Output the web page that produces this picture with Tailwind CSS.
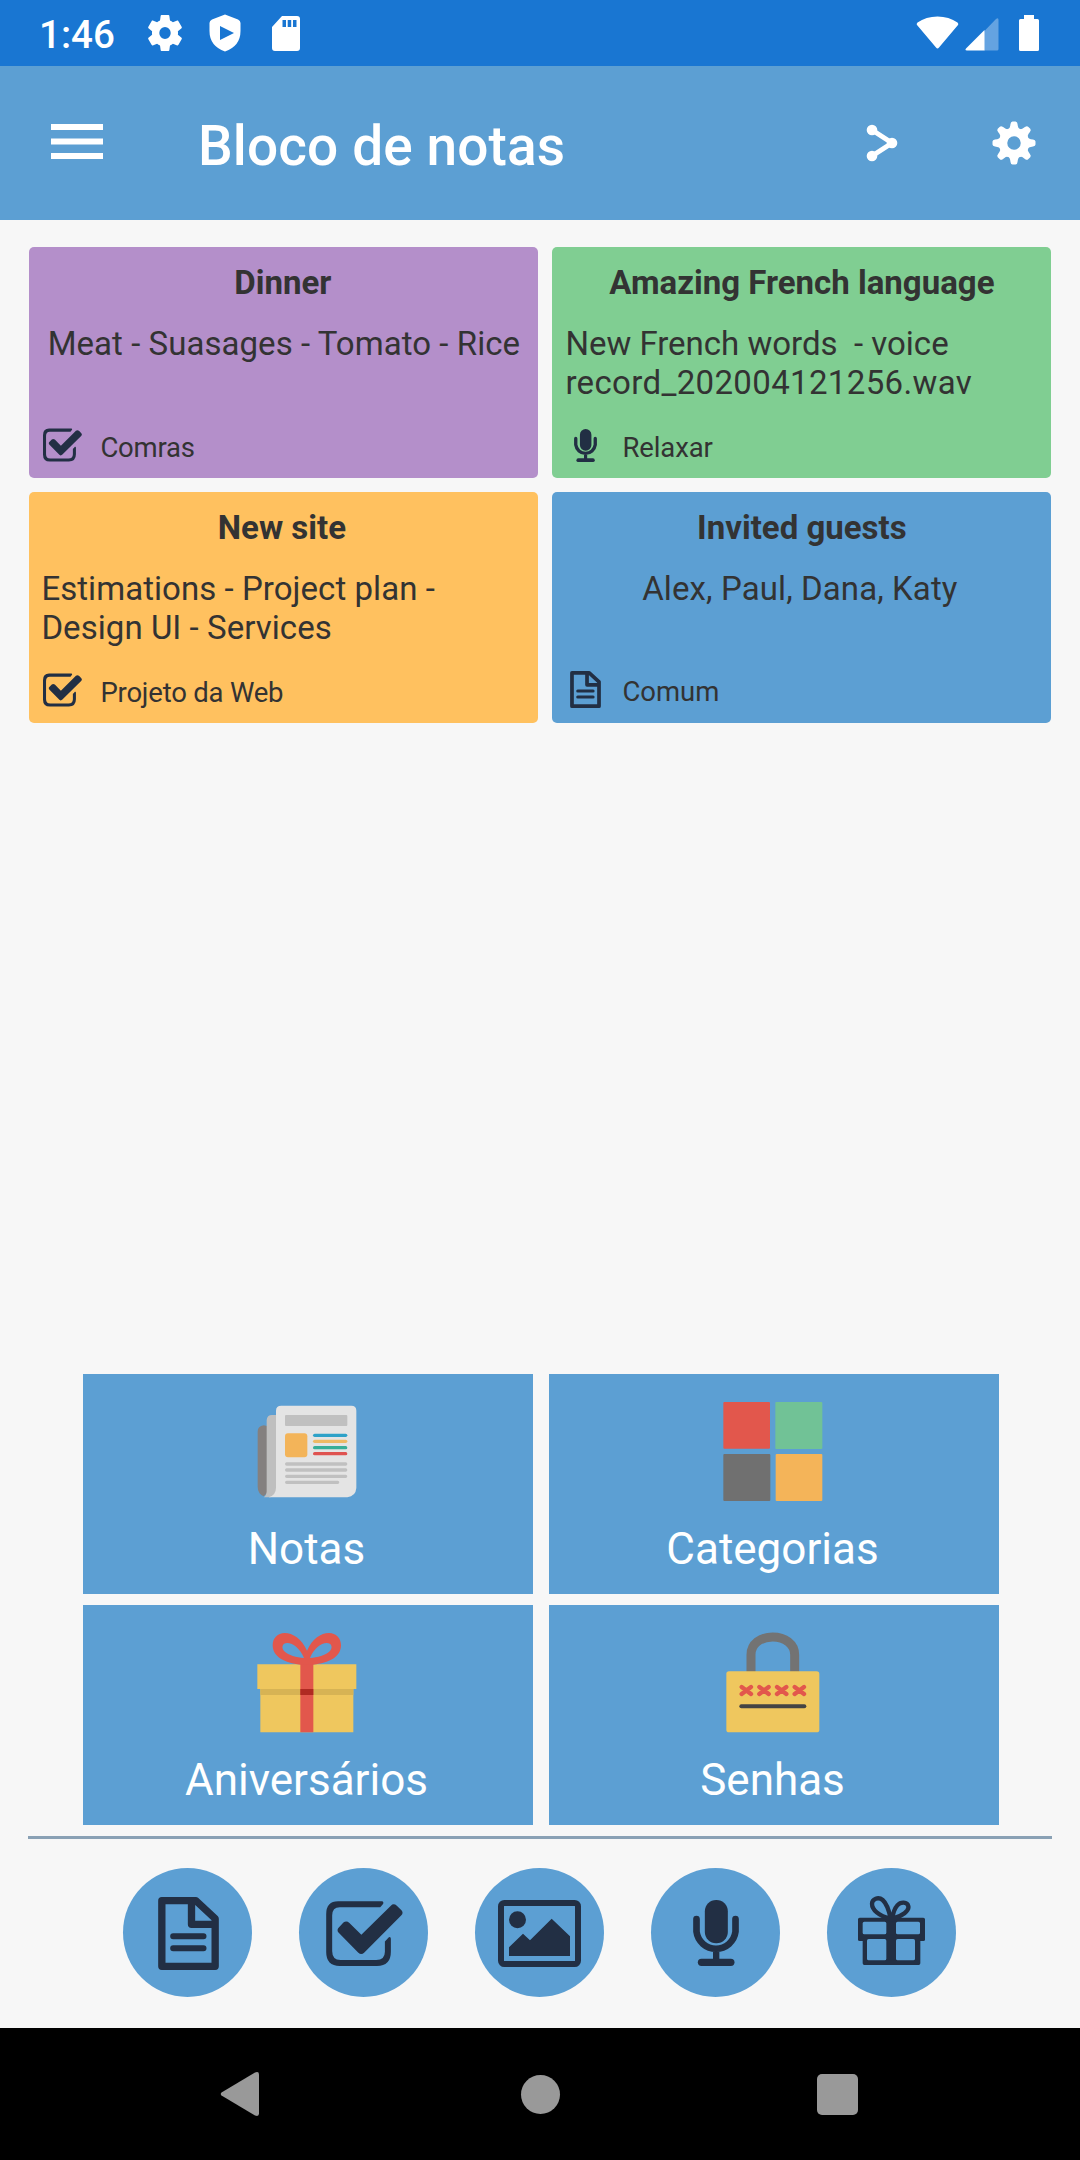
<!DOCTYPE html>
<html lang="pt">
<head>
    <meta charset="UTF-8">
    <meta name="viewport" content="width=device-width, initial-scale=1.0">
    <title>Bloco de notas</title>
    <script src="https://cdn.jsdelivr.net/npm/@tailwindcss/browser@4"></script>
</head>
<body class="bg-[#f7f7f7] font-['Roboto',sans-serif]">
    <!-- shared icons -->
    <svg class="hidden">
        <symbol id="icon-doc" viewBox="145 141 182 219">
            <path d="M156 152H258L316 206V349H156Z M245 152V223H316" fill="none" stroke="#222f44" stroke-width="22" stroke-linejoin="round"/>
            <path d="M190 259H281M190 295H281" stroke="#222f44" stroke-width="18" stroke-linecap="round"/>
        </symbol>
        <symbol id="icon-check" viewBox="649 152 231 196">
            <path d="M685 153H818Q823 154 821 160L812 171H690Q667 171 667 196V303Q667 330 692 330H800Q826 330 826 305V274L838 261Q844 259 844 266V305Q844 348 802 348H690Q649 348 649 306V192Q649 153 685 153Z" fill="#222f44"/>
            <path d="M685 234L701 217Q710 210 719 218L755 254L844 166Q852 158 862 166L876 180Q883 188 875 196L764 307Q755 316 746 308L686 247Q681 241 685 234Z" fill="#222f44"/>
        </symbol>
        <symbol id="icon-mic" viewBox="279 150 137 198">
            <rect x="314" y="150" width="69" height="130" rx="34" fill="#222f44"/>
            <path d="M289 207V245A59 59 0 0 0 406 245V207" fill="none" stroke="#222f44" stroke-width="20" stroke-linecap="round"/>
            <path d="M348 305V335" stroke="#222f44" stroke-width="19"/>
            <path d="M304 337H392" stroke="#222f44" stroke-width="22" stroke-linecap="round"/>
        </symbol>
    </svg>

    <div class="flex flex-col w-[1080px] h-[2160px] overflow-hidden">
        <!-- status bar -->
        <div class="flex justify-between h-[66px] bg-[#1976d2] text-white">
            <div class="flex items-center pl-[39px]">
                <span class="w-[109px] text-[38.5px] leading-none font-medium pt-[4px]">1:46</span>
                <svg class="w-[34px] h-[36px]" viewBox="2.2 2 19.6 20" preserveAspectRatio="none" fill="currentColor"><path d="M19.43 12.98c.04-.32.07-.64.07-.98s-.03-.66-.07-.98l2.11-1.65c.19-.15.24-.42.12-.64l-2-3.46c-.12-.22-.39-.3-.61-.22l-2.49 1c-.52-.4-1.08-.73-1.69-.98l-.38-2.65C14.46 2.18 14.25 2 14 2h-4c-.25 0-.46.18-.49.42l-.38 2.65c-.61.25-1.17.59-1.69.98l-2.49-1c-.23-.09-.49 0-.61.22l-2 3.46c-.13.22-.07.49.12.64l2.11 1.65c-.04.32-.07.65-.07.98s.03.66.07.98l-2.11 1.65c-.19.15-.24.42-.12.64l2 3.46c.12.22.39.3.61.22l2.49-1c.52.4 1.08.73 1.69.98l.38 2.65c.03.24.24.42.49.42h4c.25 0 .46-.18.49-.42l.38-2.65c.61-.25 1.17-.59 1.69-.98l2.49 1c.23.09.49 0 .61-.22l2-3.46c.12-.22.07-.49-.12-.64l-2.11-1.65zM12 15.3a3.3 3.3 0 1 1 0-6.6 3.3 3.3 0 0 1 0 6.6z"/></svg>
                <svg class="ml-[27px] w-[32px] h-[38px]" viewBox="0 0 32 38" fill="currentColor"><path fill-rule="evenodd" d="M16 0.500L29 5.500Q31.500 6.500 31.500 9V17Q31.500 32 16 37.500Q0.500 32 0.500 17V9Q0.500 6.500 3 5.500ZM11 12V26L25 19Z"/></svg>
                <svg class="ml-[31px] mt-[1px] w-[28px] h-[35px]" viewBox="0 0 28 35" fill="currentColor"><path fill-rule="evenodd" d="M10 0H25Q28 0 28 3V32Q28 35 25 35H3Q0 35 0 32V11ZM10.500 4V11H14V4ZM15.700 4V11H19.200V4ZM21 4V11H24.500V4Z"/></svg>
            </div>
            <div class="flex items-center pr-[41px]">
                <svg class="mr-[1px] w-[43px] h-[34px]" viewBox="0 0 43 34" fill="currentColor"><path d="M1 9Q0 8 1.500 6.500Q10 0.500 21.500 0.500T41.500 6.500Q43 8 42 9L23 31.500Q21.500 33.500 20 31.500Z"/></svg>
                <svg class="ml-[5px] mt-[1px] w-[34px] h-[34px]" viewBox="0 0 34 34" fill="currentColor"><path d="M19 14.500L31 2Q33.500 0 33.500 3V32Q33.500 33.500 32 33.500H19Z" opacity=".33"/><path d="M19.500 13V33.500H2Q-0.500 33.500 1 31.500Z"/></svg>
                <svg class="ml-[20px] w-[20px] h-[36px]" viewBox="0 0 20 36" fill="currentColor"><path d="M5 0H15V4H18.500Q20 4 20 5.500V34.500Q20 36 18.500 36H1.500Q0 36 0 34.500V5.500Q0 4 1.500 4H5Z"/></svg>
            </div>
        </div>

        <!-- app bar -->
        <div class="flex items-center h-[154px] pl-[51px] pr-[44px] bg-[#5c9fd3] text-white">
            <svg class="w-[52px] h-[36px] -mt-[2px]" viewBox="0 0 52 36" fill="currentColor"><path d="M0 0H52V6H0ZM0 14.500H52V20.500H0ZM0 29H52V35H0Z"/></svg>
            <h1 class="ml-[95px] mt-[7px] text-[55px] tracking-[0.1px] leading-none font-medium">Bloco de notas</h1>
            <svg class="ml-auto w-[32px] h-[38px]" viewBox="0 0 32 38"><path d="M6 6L26 19L6 32" fill="none" stroke="currentColor" stroke-width="5"/><g fill="currentColor"><circle cx="6" cy="6" r="5.300"/><circle cx="26" cy="19" r="5.300"/><circle cx="6" cy="32" r="5.300"/></g></svg>
            <svg class="ml-[94px] w-[44px] h-[44px]" viewBox="-22 -22 44 44" fill="none" stroke="currentColor">
                <circle r="11" stroke-width="8.500"/>
                <g fill="currentColor" stroke="none">
                    <path id="tooth" d="M-6.500 -13Q-4 -14 -3.500 -19Q-3.200 -21.500 -1.500 -21.500H1.500Q3.200 -21.500 3.500 -19Q4 -14 6.500 -13Z"/>
                    <use href="#tooth" transform="rotate(45)"/>
                    <use href="#tooth" transform="rotate(90)"/>
                    <use href="#tooth" transform="rotate(135)"/>
                    <use href="#tooth" transform="rotate(180)"/>
                    <use href="#tooth" transform="rotate(225)"/>
                    <use href="#tooth" transform="rotate(270)"/>
                    <use href="#tooth" transform="rotate(315)"/>
                </g>
            </svg>
        </div>

        <!-- notes -->
        <div class="grid grid-cols-[509px_499px] auto-rows-[231px] gap-[14px] pt-[26.5px] pl-[29.4px] text-[33px] leading-[39px] text-[#333333]">
            <div class="flex flex-col rounded-[5px] bg-[#b48fca] px-[12px] pt-[16px] pb-[11px]">
                <h2 class="pr-[2px] font-bold text-center">Dinner</h2>
                <p class="mt-[22px] tracking-[0.05px] text-center whitespace-nowrap">Meat - Suasages - Tomato - Rice</p>
                <div class="mt-auto flex items-center">
                    <svg class="ml-[2px] mb-[4px] w-[39px] h-[34px]"><use href="#icon-check"/></svg>
                    <span class="ml-[18px] text-[27.5px] tracking-[-0.2px]">Comras</span>
                </div>
            </div>
            <div class="flex flex-col rounded-[5px] bg-[#80ce92] px-[13px] pt-[16px] pb-[11px]">
                <h2 class="font-bold text-center">Amazing French language</h2>
                <p class="mt-[22px] whitespace-pre">New French words  - voice
<span class="tracking-[0.35px]">record_202004121256.wav</span></p>
                <div class="mt-auto flex items-center">
                    <svg class="ml-[9px] mb-[4px] w-[23px] h-[33px]"><use href="#icon-mic"/></svg>
                    <span class="ml-[25px] text-[27.5px] tracking-[-0.1px]">Relaxar</span>
                </div>
            </div>
            <div class="flex flex-col rounded-[5px] bg-[#ffc15f] px-[12px] pt-[16px] pb-[11px]">
                <h2 class="pr-[4px] font-bold text-center">New site</h2>
                <p class="mt-[22px] tracking-[0.05px]">Estimations - Project plan -<br>Design UI - Services</p>
                <div class="mt-auto flex items-center">
                    <svg class="ml-[2px] mb-[4px] w-[39px] h-[34px]"><use href="#icon-check"/></svg>
                    <span class="ml-[18px] text-[27.5px] tracking-[-0.2px]">Projeto da Web</span>
                </div>
            </div>
            <div class="flex flex-col rounded-[5px] bg-[#5c9fd3] px-[12px] pt-[16px] pb-[11px]">
                <h2 class="font-bold text-center">Invited guests</h2>
                <p class="mt-[22px] pr-[4px] tracking-[0.1px] text-center">Alex, Paul, Dana, Katy</p>
                <div class="mt-auto flex items-center">
                    <svg class="ml-[6px] mb-[4px] w-[31px] h-[37px]"><use href="#icon-doc"/></svg>
                    <span class="ml-[21px] text-[27.5px]">Comum</span>
                </div>
            </div>
        </div>

        <!-- menu tiles -->
        <div class="mt-auto grid grid-cols-[450px_450px] auto-rows-[220px] gap-x-[16px] gap-y-[11px] pl-[83px] text-[44px] leading-[52px] text-white">
            <div class="flex flex-col items-center bg-[#5c9fd3] pt-[26px] pr-[3px]">
                <svg class="w-[100px] h-[104px]" viewBox="560 105 300 312">
                    <path d="M590 183V385L580 394Q562 385 562 365V200Q562 183 580 181Z" fill="#84807f"/>
                    <path d="M618 150V380Q612 394 600 397H580Q590 390 589 375V166Q590 150 605 150Z" fill="#bfbfbf"/>
                    <path d="M633 122H843Q858 122 858 137V369Q856 394 831 397H595Q617 390 617 368V137Q617 122 633 122Z" fill="#e4e4e4"/>
                    <rect x="644" y="150" width="187" height="33" rx="3" fill="#c0c0c0"/>
                    <rect x="644" y="205" width="67" height="72" rx="9" fill="#f3b459"/>
                    <g stroke-width="10" stroke-linecap="round">
                        <path d="M733 211H826" stroke="#2ea2c8"/>
                        <path d="M733 229H826" stroke="#eeba64"/>
                        <path d="M733 248H826" stroke="#37ae98"/>
                        <path d="M733 266H826" stroke="#df5350"/>
                        <path d="M649 297H826M649 315H826M649 334H826M649 352H802" stroke="#c0c0c0"/>
                    </g>
                </svg>
                <span class="mt-[19px]">Notas</span>
            </div>
            <div class="flex flex-col items-center bg-[#5c9fd3] pt-[26px] pr-[3px]">
                <svg class="w-[100px] h-[104px]" viewBox="548 105 300 312">
                    <rect x="549" y="111" width="140" height="140" rx="3" fill="#e2574c"/>
                    <rect x="705" y="111" width="141" height="141" rx="3" fill="#71c296"/>
                    <rect x="549" y="267" width="141" height="141" rx="3" fill="#707070"/>
                    <rect x="706" y="267" width="140" height="141" rx="3" fill="#f4b459"/>
                </svg>
                <span class="mt-[19px]">Categorias</span>
            </div>
            <div class="flex flex-col items-center bg-[#5c9fd3] pt-[26px] pr-[3px]">
                <svg class="w-[100px] h-[104px]" viewBox="560 107 300 312">
                    <path d="M561 207H858V281H849V411H570V281H561Z" fill="#efc75e"/>
                    <path d="M570 281H849V299H570Z" fill="#d7b354"/>
                    <path d="M690 190H729V411H690Z" fill="#e2574c"/>
                    <path d="M690 281H729V299H690Z" fill="#b02a22"/>
                    <path fill-rule="evenodd" d="M710 166C694 130 667 113 643 113C622 113 607 128 607 150C607 185 644 203 690 208H729C776 203 812 185 812 150C812 128 797 113 776 113C752 113 726 130 710 166ZM701 188C690 160 668 143 651 143C635 143 632 158 642 168C655 180 678 187 701 188ZM719 188C730 160 752 143 769 143C785 143 788 158 778 168C765 180 742 187 719 188Z" fill="#e2574c"/>
                </svg>
                <span class="mt-[19px]">Aniversários</span>
            </div>
            <div class="flex flex-col items-center bg-[#5c9fd3] pt-[26px] pr-[3px]">
                <svg class="w-[100px] h-[104px]" viewBox="548 107 300 312">
                    <path d="M632 232V178C632 146 660 125 697 125S763 146 763 178V232" fill="none" stroke="#737373" stroke-width="27"/>
                    <path d="M558 236Q558 228 566 228H829Q837 228 837 236V403Q837 411 829 411H566Q558 411 558 403Z" fill="#efc75e"/>
                    <path d="M604 275L632 296M632 275L604 296M657 275L685 296M685 275L657 296M710 275L738 296M738 275L710 296M763 275L791 296M791 275L763 296" stroke="#e2574c" stroke-width="13" stroke-linecap="round"/>
                    <path d="M603 333H792" stroke="#444444" stroke-width="12" stroke-linecap="round"/>
                </svg>
                <span class="mt-[19px]">Senhas</span>
            </div>
        </div>

        <div class="mt-[11px] mx-[28px] h-[3px] bg-[#8aa1b5]"></div>

        <!-- quick add buttons -->
        <div class="mt-[29px] mb-[31px] flex gap-[47px] pl-[123.4px]">
            <div class="flex items-center justify-center w-[129px] h-[129px] pl-[1px] pt-[2px] rounded-full bg-[#5c9fd3]">
                <svg class="w-[61px] h-[73px]"><use href="#icon-doc"/></svg>
            </div>
            <div class="flex items-center justify-center w-[129px] h-[129px] pl-[1px] pt-[1px] rounded-full bg-[#5c9fd3]">
                <svg class="w-[77px] h-[65px]"><use href="#icon-check"/></svg>
            </div>
            <div class="flex items-center justify-center w-[129px] h-[129px] pt-[2px] rounded-full bg-[#5c9fd3]">
                <svg class="w-[83px] h-[67px]" viewBox="1167 150 249 201">
                    <rect x="1176" y="159" width="231" height="183" rx="10" fill="none" stroke="#222f44" stroke-width="18"/>
                    <circle cx="1225.500" cy="209" r="25.500" fill="#222f44"/>
                    <path d="M1200 318V292L1242 251L1263 271L1328 206L1383 259V318Z" fill="#222f44"/>
                </svg>
            </div>
            <div class="flex items-center justify-center w-[129px] h-[129px] pt-[1px] rounded-full bg-[#5c9fd3]">
                <svg class="w-[46px] h-[66px]"><use href="#icon-mic"/></svg>
            </div>
            <div class="flex items-center justify-center w-[129px] h-[129px] pb-[5px] rounded-full bg-[#5c9fd3]">
                <svg class="w-[67px] h-[69px]" viewBox="777 137 201 207">
                    <path fill-rule="evenodd" d="M782 202H973Q978 202 978 207V268Q978 272 973 272H964V339Q964 344 959 344H796Q791 344 791 339V272H782Q777 272 777 268V207Q777 202 782 202ZM796 214Q791 214 791 219V247Q791 252 796 252H857Q862 252 862 247V219Q862 214 857 214ZM896 214Q891 214 891 219V247Q891 252 896 252H958Q963 252 963 247V219Q963 214 958 214ZM809 266Q804 266 804 271V325Q804 330 809 330H857Q862 330 862 325V271Q862 266 857 266ZM896 266Q891 266 891 271V325Q891 330 896 330H943Q948 330 948 325V271Q948 266 943 266Z" fill="#222f44"/>
                    <path d="M875 205C838 196 819 178 819 160C819 146 838 138 851 149C865 161 870 180 875 205ZM880 205C910 198 931 181 928 168C925 154 905 154 895 165C886 175 882 190 880 205Z" fill="none" stroke="#222f44" stroke-width="13"/>
                </svg>
            </div>
        </div>

        <!-- system navigation -->
        <div class="flex items-center h-[132px] bg-black pl-[220px]">
            <svg class="w-[39px] h-[46px]" viewBox="0 0 39 46" fill="#999999"><path d="M1.500 21.500L35 1.500Q39 0 39 3.500V42.500Q39 46 35 44.500L1.500 24.500Q0 23 1.500 21.500Z"/></svg>
            <div class="ml-[262px] w-[39px] h-[39px] rounded-full bg-[#999999]"></div>
            <div class="ml-[257px] w-[41px] h-[41px] rounded-[5px] bg-[#999999]"></div>
        </div>
    </div>
</body>
</html>
